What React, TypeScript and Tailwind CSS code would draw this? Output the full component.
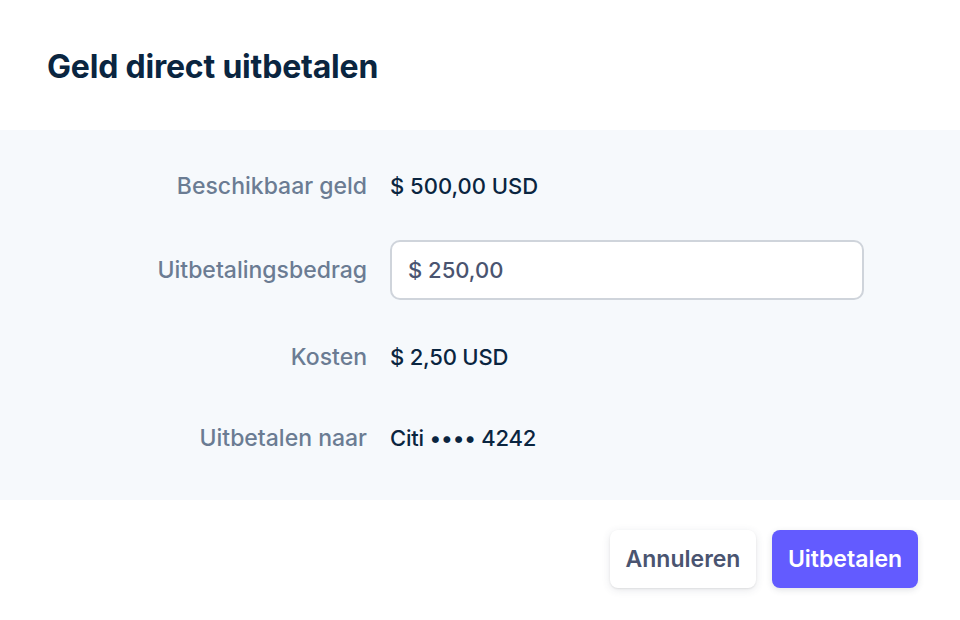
import React from 'react';

const rows = [
  { label: 'Kosten', value: '$ 2,50 USD' },
  { label: 'Uitbetalen naar', value: 'Citi •••• 4242' },
];

export default function App() {
  return (
    <div className="w-[960px] h-[620px] bg-white flex flex-col" style={{ fontFamily: 'Inter, "Noto Sans", sans-serif' }}>
      {/* Header */}
      <div className="h-[130px] px-[47px] flex items-center shrink-0">
        <h1 className="text-[32px] font-bold text-[#0a2540] tracking-[-0.2px] mt-[4px]">Geld direct uitbetalen</h1>
      </div>

      {/* Body */}
      <div className="h-[370px] bg-[#f6f9fc] shrink-0 pt-[40px]">
        <div className="grid grid-cols-[367px_474px] gap-x-[23px] items-center">
          <div className="text-right text-[23px] font-medium text-[#6b7c93] h-[32px] leading-[32px]">Beschikbaar geld</div>
          <div className="text-[22px] font-medium text-[#0a2540] h-[32px] leading-[32px]">$ 500,00 USD</div>

          <div className="text-right text-[23px] font-medium text-[#6b7c93] mt-[38px]">Uitbetalingsbedrag</div>
          <div className="mt-[38px] h-[60px] rounded-[10px] border-2 border-[#cfd4db] bg-white flex items-center px-[16px]">
            <span className="text-[22px] font-medium text-[#4a5470]">$ 250,00</span>
          </div>

          {rows.map((r, i) => (
            <React.Fragment key={r.label}>
              <div className={`text-right text-[23px] font-medium text-[#6b7c93] h-[32px] leading-[32px] ${i === 0 ? 'mt-[41px]' : 'mt-[49px]'}`}>{r.label}</div>
              <div className={`text-[22px] font-medium text-[#0a2540] h-[32px] leading-[32px] tracking-[-0.2px] ${i === 0 ? 'mt-[41px]' : 'mt-[49px]'}`}>{r.value}</div>
            </React.Fragment>
          ))}
        </div>
      </div>

      {/* Footer */}
      <div className="flex-1 flex justify-end items-start pt-[30px] pr-[42px] gap-[16px]">
        <button className="w-[146px] h-[58px] rounded-[8px] bg-white text-[23px] font-semibold text-[#4a5470] shadow-[0_1px_2px_rgba(0,0,0,0.08),0_2px_8px_rgba(60,66,87,0.12)]">
          Annuleren
        </button>
        <button className="w-[146px] h-[58px] rounded-[8px] bg-[#635bff] text-[23px] font-semibold text-white shadow-[0_2px_6px_rgba(60,66,87,0.15)]">
          Uitbetalen
        </button>
      </div>
    </div>
  );
}
